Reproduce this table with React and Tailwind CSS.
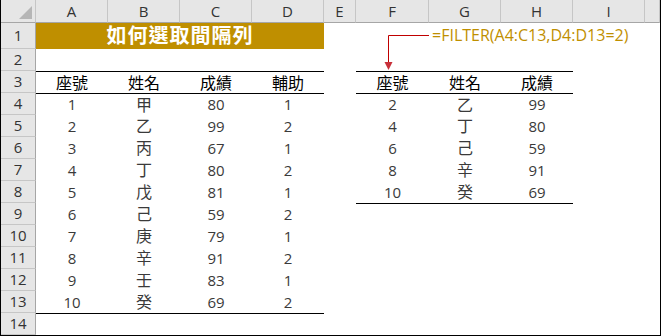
const cols = [
  { k: "A", w: "w-[72px]" },
  { k: "B", w: "w-[72px]" },
  { k: "C", w: "w-[72px]" },
  { k: "D", w: "w-[72px]" },
  { k: "E", w: "w-[32px]" },
  { k: "F", w: "w-[73px]" },
  { k: "G", w: "w-[72px]" },
  { k: "H", w: "w-[72px]" },
  { k: "I", w: "w-[72px]" },
  { k: "", w: "w-[15px]" },
];

const left = [
  [1, "甲", 80, 1],
  [2, "乙", 99, 2],
  [3, "丙", 67, 1],
  [4, "丁", 80, 2],
  [5, "戊", 81, 1],
  [6, "己", 59, 2],
  [7, "庚", 79, 1],
  [8, "辛", 91, 2],
  [9, "壬", 83, 1],
  [10, "癸", 69, 2],
];

const right = left.filter((r) => r[3] === 2).map((r) => r.slice(0, 3));

const cellValue = (row, ci) => {
  if (row === 3) {
    if (ci < 4) return ["座號", "姓名", "成績", "輔助"][ci];
    if (ci >= 5 && ci <= 7) return ["座號", "姓名", "成績"][ci - 5];
  }
  if (row >= 4 && row <= 13 && ci < 4) return left[row - 4][ci];
  if (row >= 4 && row <= 8 && ci >= 5 && ci <= 7) return right[row - 4][ci - 5];
  return "";
};

const hasTopLine = (row, ci) => {
  if (ci < 4) return row === 3 || row === 4 || row === 14;
  if (ci >= 5 && ci <= 7) return row === 3 || row === 4 || row === 9;
  return false;
};

const RowHead = ({ label, h }) => (
  <div
    className={`${h} w-[35px] shrink-0 bg-[#e6e6e6] border-b border-r border-b-[#c6c6c6] border-r-[#a6a6a6] flex items-center justify-center text-[15px] text-[#333]`}
  >
    {label}
  </div>
);

const App = () => {
  const rows = Array.from({ length: 12 }, (_, i) => i + 3);

  return (
    <div className="relative w-[661px] h-[336px] overflow-hidden bg-white border-l border-r border-b border-black font-['Open_Sans','Noto_Sans_CJK_TC',sans-serif] leading-none">
      {/* column headers */}
      <div className="flex h-[23px]">
        <div className="w-[35px] shrink-0 bg-[#e6e6e6] border-b border-r border-b-[#a6a6a6] border-r-[#c6c6c6] relative">
          <svg width="35" height="23" className="absolute left-0 top-0">
            <polygon points="31,6 31,19 18,19" fill="#b6b6b6" />
          </svg>
        </div>
        {cols.map((c, i) => (
          <div
            key={i}
            className={`${c.w} shrink-0 bg-[#e6e6e6] border-b border-r border-b-[#a6a6a6] border-r-[#c6c6c6] flex items-center justify-center text-[15px] text-[#333]`}
          >
            {c.k}
          </div>
        ))}
      </div>

      {/* row 1 */}
      <div className="flex h-[26px]">
        <RowHead label="1" h="h-[26px]" />
        <div className="w-[288px] shrink-0 bg-[#bf8f00] flex items-center justify-center text-white font-bold text-[20px] tracking-[1px]">
          如何選取間隔列
        </div>
        <div className="w-[32px] shrink-0" />
        <div className="w-[73px] shrink-0" />
        <div className="w-[72px] shrink-0 relative">
          <span className="absolute left-[3px] top-[4px] whitespace-nowrap text-[16px] text-[#bf8f00]">
            =FILTER(A4:C13,D4:D13=2)
          </span>
        </div>
      </div>

      {/* row 2 */}
      <div className="flex h-[22px]">
        <RowHead label="2" h="h-[22px]" />
      </div>

      {rows.map((r) => (
        <div key={r} className="flex h-[22px]">
          <RowHead label={r} h="h-[22px]" />
          {cols.map((c, ci) => {
            const v = cellValue(r, ci);
            const cjk = typeof v === "string";
            return (
              <div
                key={ci}
                className={`${c.w} shrink-0 h-[22px] flex items-center justify-center ${
                  hasTopLine(r, ci) ? "border-t border-black" : ""
                } ${r === 3 ? "text-[16px] text-black" : cjk ? "text-[16px] text-[#3a3a3a]" : "text-[15px] text-[#3a3a3a]"}`}
              >
                {v}
              </div>
            );
          })}
        </div>
      ))}

      {/* arrow from formula to result */}
      <svg width="50" height="45" className="absolute left-[380px] top-[30px]">
        <path d="M48 5.5 H7.5 V33" stroke="#c00000" strokeWidth="1" fill="none" />
        <polygon points="3.5,32 11.5,32 7.5,40" fill="#c8303a" />
      </svg>
    </div>
  );
};

export default App;
